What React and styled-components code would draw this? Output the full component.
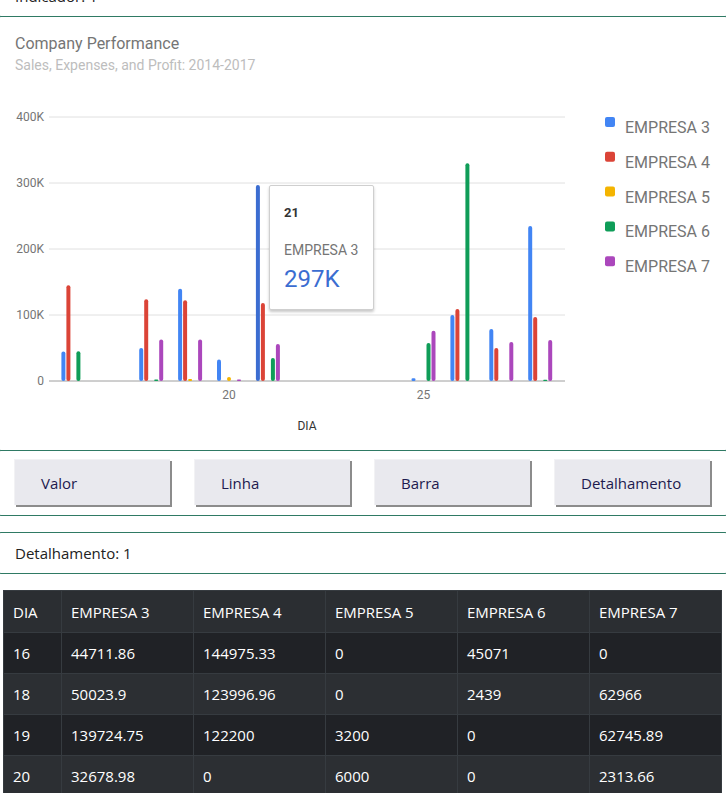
import React from 'react';
import styled, { createGlobalStyle } from 'styled-components';

const GlobalStyle = createGlobalStyle`
  html, body {
    margin: 0;
    padding: 0;
    overflow: hidden;
    background: #fff;
  }
  body {
    font-family: "Open Sans", "Noto Sans", sans-serif;
  }
`;

const Page = styled.div`
  margin-top: -25px;
`;

const Card = styled.div`
  margin: -1px -4px 0 -4px;
  border: 1px solid #2f7a64;
  border-radius: 5px;
  background: #fff;
`;

const TextCard = styled(Card)`
  margin-top: ${p => (p.$gap ? '16px' : '-1px')};
  padding: 0 0 0 18px;
  height: 40px;
  display: flex;
  align-items: center;
  font-size: 15px;
  color: #222;
`;

const ChartCard = styled(Card)`
  position: relative;
  height: 433px;
  display: flex;
  flex-direction: column;
  font-family: Roboto, "Liberation Sans", sans-serif;
`;

const ChartHeader = styled.div`
  height: 63px;
  box-sizing: border-box;
  padding: 17px 0 0 18px;
`;

const Title = styled.div`
  font-size: 16px;
  line-height: 20px;
  color: #757575;
`;

const Subtitle = styled.div`
  margin-top: 2px;
  font-size: 14px;
  line-height: 18px;
  color: #bdbdbd;
`;

const Plot = styled.svg`
  display: block;
  margin-left: 7px;
`;

const Tooltip = styled.div`
  position: absolute;
  left: 272px;
  top: 168px;
  width: 105px;
  height: 125px;
  box-sizing: border-box;
  padding: 18px 0 0 14px;
  background: #fff;
  border: 1px solid #cfcfcf;
  border-radius: 2px;
  box-shadow: 0 2px 3px rgba(0, 0, 0, 0.22);
`;

const TipDay = styled.div`
  font-size: 13px;
  font-weight: 700;
  line-height: 18px;
  color: #333;
`;

const TipLabel = styled.div`
  margin-top: 19px;
  font-size: 14px;
  line-height: 18px;
  color: #757575;
`;

const TipValue = styled.div`
  margin-top: 5px;
  font-size: 24px;
  line-height: 30px;
  color: #3b6dd1;
`;

const ButtonBar = styled(Card)`
  height: 66px;
  box-sizing: border-box;
  padding: 8px 0 0 17px;
  display: flex;
  gap: 24px;
`;

const ActionButton = styled.button`
  width: 156px;
  height: 46px;
  padding: 0 0 0 26px;
  text-align: left;
  border: none;
  border-top: 1px solid #f2f2f4;
  border-left: 1px solid #f2f2f4;
  background: #e9e9ee;
  box-shadow: 2px 2px 0 #8c8c8c;
  font-family: "Open Sans", "Noto Sans", sans-serif;
  font-size: 15px;
  color: #1d1a4e;
`;

const Table = styled.table`
  margin: 16px 0 0 3px;
  width: 719px;
  table-layout: fixed;
  border-collapse: collapse;
  color: #fff;
  font-size: 15px;
`;

const Th = styled.th`
  height: 42px;
  padding: 0 9px;
  text-align: left;
  font-weight: 400;
  background: #2b2e32;
  border: 1px solid #363b40;
  width: ${p => p.$w}px;
  box-sizing: border-box;
`;

const Row = styled.tr`
  background: ${p => (p.$odd ? '#2c2f33' : '#202226')};
`;

const Td = styled.td`
  height: 40px;
  padding: 0 9px;
  border: 1px solid #363b40;
`;

const COLORS = ['#4285f4', '#db4437', '#f4b400', '#0f9d58', '#ab47bc'];
const NAMES = ['EMPRESA 3', 'EMPRESA 4', 'EMPRESA 5', 'EMPRESA 6', 'EMPRESA 7'];

const SERIES = [
  { d: 16, v: [44711.86, 144975.33, 0, 45071, 0] },
  { d: 18, v: [50023.9, 123996.96, 0, 2439, 62966] },
  { d: 19, v: [139724.75, 122200, 3200, 0, 62745.89] },
  { d: 20, v: [32678.98, 0, 6000, 0, 2313.66] },
  { d: 21, v: [297000, 118000, 0, 35000, 56000] },
  { d: 25, v: [4000, 0, 0, 57600, 76000] },
  { d: 26, v: [100000, 109000, 0, 330000, 0] },
  { d: 27, v: [78800, 50000, 0, 0, 59000] },
  { d: 28, v: [235000, 97000, 0, 2000, 62000] },
];

const ROWS = [
  ['16', '44711.86', '144975.33', '0', '45071', '0'],
  ['18', '50023.9', '123996.96', '0', '2439', '62966'],
  ['19', '139724.75', '122200', '3200', '0', '62745.89'],
  ['20', '32678.98', '0', '6000', '0', '2313.66'],
];

// plot coordinates are page x minus 4, page y minus 80
const BASE = 301;
const dayX = d => 225 + (d - 20) * 38.9;
const h = v => (v / 1000) * 0.66;

function Chart() {
  return (
    <Plot width="722" height="370">
      {[0, 1, 2, 3, 4].map(i => {
        const y = BASE - i * 66;
        return (
          <g key={i}>
            <line x1="45" x2="561" y1={y} y2={y} stroke={i === 0 ? '#9e9e9e' : '#e0e0e0'} strokeWidth="1" />
            <text x="40" y={y + 4} textAnchor="end" fontSize="12" fill="#757575">
              {i === 0 ? '0' : `${i}00K`}
            </text>
          </g>
        );
      })}
      {SERIES.map(s =>
        s.v.map((v, k) => {
          if (!v) return null;
          const bh = h(v);
          const sel = s.d === 21 && k === 0;
          return (
            <rect
              key={`${s.d}-${k}`}
              x={dayX(s.d) + (k - 2) * 5 - 2}
              y={BASE - bh}
              width="4"
              height={bh}
              rx={Math.min(2, bh / 2)}
              fill={sel ? '#3b6dd1' : COLORS[k]}
            />
          );
        })
      )}
      <text x={dayX(20)} y="319" textAnchor="middle" fontSize="12" fill="#757575">20</text>
      <text x={dayX(25)} y="319" textAnchor="middle" fontSize="12" fill="#757575">25</text>
      <text x="303" y="350" textAnchor="middle" fontSize="12" fill="#333">DIA</text>
      {NAMES.map((n, i) => (
        <g key={n}>
          <rect x="601" y={37 + i * 34.8} width="10" height="10" rx="2" fill={COLORS[i]} />
          <text x="621" y={53 + i * 34.8} fontSize="16" fill="#757575">{n}</text>
        </g>
      ))}
    </Plot>
  );
}

export default function App() {
  return (
    <Page>
      <GlobalStyle />
      <TextCard>Indicador: 1</TextCard>
      <ChartCard>
        <ChartHeader>
          <Title>Company Performance</Title>
          <Subtitle>Sales, Expenses, and Profit: 2014-2017</Subtitle>
        </ChartHeader>
        <Chart />
        <Tooltip>
          <TipDay>21</TipDay>
          <TipLabel>EMPRESA 3</TipLabel>
          <TipValue>297K</TipValue>
        </Tooltip>
      </ChartCard>
      <ButtonBar>
        <ActionButton>Valor</ActionButton>
        <ActionButton>Linha</ActionButton>
        <ActionButton>Barra</ActionButton>
        <ActionButton>Detalhamento</ActionButton>
      </ButtonBar>
      <TextCard $gap>Detalhamento: 1</TextCard>
      <Table>
        <thead>
          <tr>
            {['DIA', ...NAMES].map((c, i) => (
              <Th key={c} $w={i === 0 ? 58 : 132}>{c}</Th>
            ))}
          </tr>
        </thead>
        <tbody>
          {ROWS.map((r, i) => (
            <Row key={r[0]} $odd={i % 2 === 1}>
              {r.map((c, j) => (
                <Td key={j}>{c}</Td>
              ))}
            </Row>
          ))}
        </tbody>
      </Table>
    </Page>
  );
}
